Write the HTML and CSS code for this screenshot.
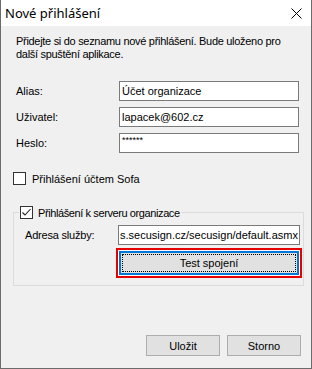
FILE: index.html
```html
<!DOCTYPE html>
<html lang="cs">

<head>
    <meta charset="UTF-8">
    <meta name="viewport" content="width=device-width, initial-scale=1.0">
    <link rel="stylesheet" href="styles.css">
    <title>Nové přihlášení</title>
</head>

<body>

    <div class="window">
        <div class="titlebar">
            <span class="title">Nové přihlášení</span>
            <svg class="close" width="11" height="11" viewBox="0 0 11 11">
                <path d="M0.5 0.5 L10.5 10.5 M10.5 0.5 L0.5 10.5" stroke="#000" stroke-width="1" fill="none" />
            </svg>
        </div>
        <div class="content">
            <p class="intro">Přidejte si do seznamu nové přihlášení. Bude uloženo pro<br>další spuštění aplikace.</p>

            <div class="fields">
                <div class="row">
                    <span class="label">Alias:</span>
                    <div class="input">Účet organizace</div>
                </div>
                <div class="row">
                    <span class="label">Uživatel:</span>
                    <div class="input">lapacek@602.cz</div>
                </div>
                <div class="row">
                    <span class="label">Heslo:</span>
                    <div class="input input_pass">******</div>
                </div>
            </div>

            <div class="check_row">
                <span class="check"></span>
                <span>Přihlášení účtem Sofa</span>
            </div>

            <fieldset class="group">
                <legend class="group_legend">
                    <span class="check">
                        <svg width="11" height="11" viewBox="0 0 11 11">
                            <path d="M1.5 5.5 L4 8 L9.5 2" stroke="#222" stroke-width="1.1" fill="none" />
                        </svg>
                    </span>
                    <span class="legend_text">Přihlášení k serveru organizace</span>
                </legend>
                <div class="group_body">
                    <div class="row">
                        <span class="label label_small">Adresa služby:</span>
                        <div class="input input_wide">s.secusign.cz/secusign/default.asmx</div>
                    </div>
                    <div class="focus_ring">
                        <div class="test_button"><span class="test_inner">Test spojení</span></div>
                    </div>
                </div>
            </fieldset>

            <div class="buttons">
                <div class="button">Uložit</div>
                <div class="button">Storno</div>
            </div>
        </div>
    </div>

</body>

</html>
```

FILE: styles.css
```css
* {
    margin: 0px;
    padding: 0px;
    box-sizing: border-box;
}

body {
    font-family: "Liberation Sans", Arial, sans-serif;
    font-size: 11px;
    color: #000000;
    background: #f0f0f0;
}

.window {
    width: 312px;
    height: 369px;
    border: 1px solid #6b6b6b;
    border-top: none;
    background: #f0f0f0;
    overflow: hidden;
}

.titlebar {
    height: 26px;
    background: #ffffff;
    display: flex;
    align-items: center;
    justify-content: space-between;
    padding: 0px 9px 0px 4px;
}

.title {
    font-family: "Noto Sans", "Liberation Sans", sans-serif;
    font-size: 13px;
    padding-bottom: 1px;
}

.close {
    display: block;
}

.content {
    padding: 9px 7px 0px 12px;
}

.intro {
    line-height: 13px;
    padding-left: 3px;
    letter-spacing: -0.3px;
}

.fields {
    display: flex;
    flex-direction: column;
    gap: 6px;
    margin-top: 20px;
}

.row {
    display: flex;
    align-items: center;
    height: 20px;
}

.label {
    width: 106px;
    padding-left: 3px;
}

.label_small {
    width: 104px;
    padding-left: 11px;
    letter-spacing: -0.2px;
}

.input {
    width: 180px;
    height: 20px;
    background: #ffffff;
    border: 1px solid #7a7a7a;
    padding: 0px 2px;
    line-height: 18px;
    white-space: nowrap;
    overflow: hidden;
}

.input_pass {
    font-size: 9px;
    line-height: 12px;
}

.input_wide {
    width: 182px;
    padding: 0px 1px;
}

.check_row {
    display: flex;
    align-items: center;
    gap: 6px;
    margin-top: 19px;
    height: 13px;
}

.check {
    width: 13px;
    height: 13px;
    border: 1px solid #333333;
    background: #ffffff;
    display: flex;
    align-items: center;
    justify-content: center;
}

.check svg {
    display: block;
}

.group {
    width: 291px;
    margin-top: 21px;
    border: 1px solid #dcdcdc;
    padding: 0px;
}

.group_legend {
    display: flex;
    align-items: center;
    gap: 5px;
    margin-left: 5px;
    padding: 0px 1px;
    height: 13px;
}

.legend_text {
    letter-spacing: -0.4px;
}

.group_body {
    padding: 6px 0px 7px 0px;
}

.focus_ring {
    width: 186px;
    height: 30px;
    margin: 3px 0px 0px 102px;
    border: 2px solid #e60000;
    background: #ffffff;
    padding: 1px;
}

.test_button {
    width: 100%;
    height: 100%;
    border: 2px solid #0078d7;
    background: #e1e1e1;
    padding: 1px;
}

.test_inner {
    display: flex;
    align-items: center;
    justify-content: center;
    width: 100%;
    height: 100%;
    border: 1px dotted #000000;
}

.buttons {
    display: flex;
    justify-content: flex-end;
    gap: 7px;
    margin-top: 49px;
    padding-right: 3px;
}

.button {
    width: 74px;
    height: 21px;
    border: 1px solid #adadad;
    background: #e1e1e1;
    display: flex;
    align-items: center;
    justify-content: center;
}
```
